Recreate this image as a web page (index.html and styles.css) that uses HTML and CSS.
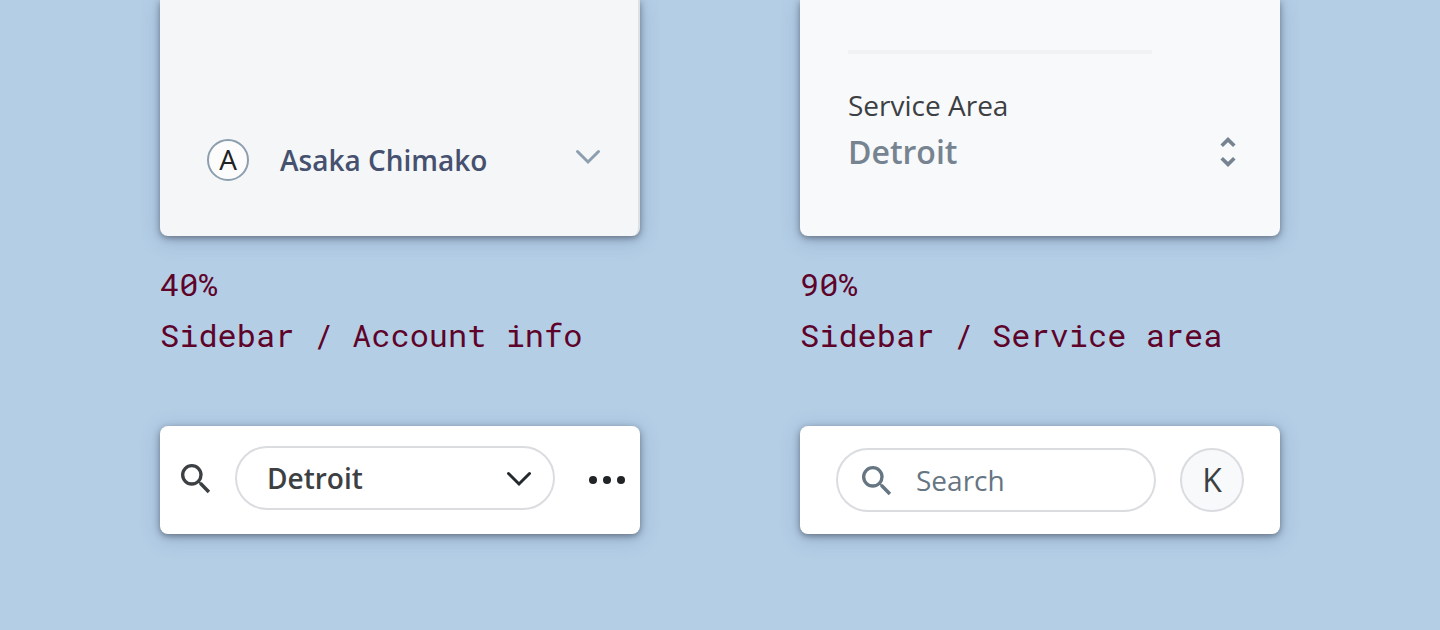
FILE: index.html
```html
<!DOCTYPE html>
<html lang="en">
<head>
<meta charset="utf-8">
<meta name="viewport" content="width=device-width, initial-scale=1">
<title>Sidebar components</title>
<link rel="stylesheet" href="styles.css">
</head>
<body>
<main class="gallery">
  <figure class="sample">
    <div class="card card-tall card-account">
      <button class="account" type="button">
        <span class="account-avatar">A</span>
        <span class="account-name">Asaka Chimako</span>
        <svg class="account-chevron" width="28" height="20" viewBox="0 0 28 20" fill="none" stroke="currentColor" stroke-width="3" stroke-linecap="round" aria-hidden="true"><path d="M3.5 4.5 14 15 24.5 4.5"/></svg>
      </button>
    </div>
    <figcaption class="caption"><span>40%</span><span>Sidebar / Account info</span></figcaption>
  </figure>

  <figure class="sample">
    <div class="card card-tall card-service">
      <hr class="divider">
      <label class="service-label" for="service-area">Service Area</label>
      <div class="picker">
        <select class="picker-field service-select" id="service-area"><option>Detroit</option></select>
        <svg class="picker-icon service-icon" width="16" height="32" viewBox="0 0 16 32" fill="none" stroke="currentColor" stroke-width="3.6" aria-hidden="true"><path d="M1.7 9.8 8 3.6l6.3 6.2M1.7 22.2 8 28.4l6.3-6.2"/></svg>
      </div>
    </div>
    <figcaption class="caption"><span>90%</span><span>Sidebar / Service area</span></figcaption>
  </figure>

  <section class="card toolbar toolbar-area">
    <button class="icon-button" type="button" aria-label="Search">
      <svg class="search-icon" width="40" height="40" viewBox="0 0 24 24" fill="currentColor" aria-hidden="true"><path d="M15.5 14h-.79l-.28-.27A6.47 6.47 0 0 0 16 9.5 6.5 6.5 0 1 0 9.5 16c1.61 0 3.09-.59 4.23-1.57l.27.28v.79l5 4.99L20.49 19zm-6 0a4.5 4.5 0 1 1 0-9 4.5 4.5 0 0 1 0 9z"/></svg>
    </button>
    <div class="picker area-picker">
      <select class="picker-field pill area-select" aria-label="Area"><option>Detroit</option></select>
      <svg class="picker-icon area-icon" width="28" height="20" viewBox="0 0 28 20" fill="none" stroke="currentColor" stroke-width="3" stroke-linecap="round" aria-hidden="true"><path d="M3.5 4.5 14 15 24.5 4.5"/></svg>
    </div>
    <button class="icon-button more" type="button" aria-label="More options">
      <svg width="36" height="8" viewBox="0 0 36 8" fill="currentColor" aria-hidden="true"><circle cx="4" cy="4" r="4"/><circle cx="18" cy="4" r="4"/><circle cx="32" cy="4" r="4"/></svg>
    </button>
  </section>

  <section class="card toolbar toolbar-search">
    <label class="pill search">
      <svg class="search-icon" width="40" height="40" viewBox="0 0 24 24" fill="currentColor" aria-hidden="true"><path d="M15.5 14h-.79l-.28-.27A6.47 6.47 0 0 0 16 9.5 6.5 6.5 0 1 0 9.5 16c1.61 0 3.09-.59 4.23-1.57l.27.28v.79l5 4.99L20.49 19zm-6 0a4.5 4.5 0 1 1 0-9 4.5 4.5 0 0 1 0 9z"/></svg>
      <input class="search-input" type="search" placeholder="Search" aria-label="Search">
    </label>
    <button class="profile" type="button">K</button>
  </section>
</main>
</body>
</html>
```
FILE: styles.css
```css
* {
  box-sizing: border-box;
}

body {
  margin: 0;
  background: #b4cee6;
  font-family: "Open Sans", "Noto Sans", sans-serif;
  font-size: 28px;
  line-height: 40px;
  color: #3c4043;
}

button,
select,
input {
  margin: 0;
  padding: 0;
  border: 0;
  background: none;
  font: inherit;
  color: inherit;
}

svg {
  display: block;
  flex: none;
}

.gallery {
  display: grid;
  grid-template-columns: repeat(2, minmax(0, 1fr));
  gap: 66px 160px;
  padding: 0 160px 96px;
}

.sample {
  display: flex;
  flex-direction: column;
  gap: 22px;
  margin: 0;
}

.card {
  border-radius: 8px;
  background: #fff;
  box-shadow: 0 2px 6px rgba(40, 45, 55, 0.5), 0 4px 20px rgba(60, 80, 120, 0.25);
}

.card-tall {
  border-radius: 0 0 8px 8px;
}

.card-account {
  flex: 1;
  display: flex;
  flex-direction: column;
  justify-content: flex-end;
  padding: 0 36px 55px 47px;
  border-right: 2px solid #dde1e4;
  background: #f4f6f8;
}

.account {
  display: flex;
  align-items: center;
  text-align: left;
}

.account-avatar {
  width: 42px;
  height: 42px;
  border: 2px solid #8d9eae;
  border-radius: 50%;
  background: #fcfcfd;
  color: #202124;
  line-height: 36px;
  text-align: center;
}

.account-name {
  flex: 1;
  margin-left: 31px;
  font-weight: 600;
  color: #46516f;
}

.account-chevron {
  margin-bottom: 6px;
  color: #8d9eae;
}

.card-service {
  padding: 50px 44px 57px 48px;
  background: #f8f9fb;
}

.divider {
  width: 304px;
  height: 4px;
  margin: 0 0 31px;
  border: 0;
  background: #f1f2f4;
}

.service-label {
  display: block;
}

.picker {
  display: grid;
  align-items: center;
}

.picker-field {
  grid-area: 1 / 1;
  width: 100%;
  appearance: none;
}

.picker-icon {
  grid-area: 1 / 1;
  justify-self: end;
  pointer-events: none;
}

.service-select {
  height: 54px;
  font-size: 32px;
  font-weight: 600;
  color: #768390;
}

.service-icon {
  color: #768390;
}

.caption {
  display: flex;
  flex-direction: column;
  font-family: "Roboto Mono", "Liberation Mono", monospace;
  font-size: 32px;
  line-height: 51px;
  color: #5e0329;
}

.toolbar {
  display: flex;
  align-items: center;
  min-height: 108px;
}

.toolbar-area {
  gap: 19px;
  padding: 20px 15px 24px 16px;
}

.search-icon {
  margin-top: 2px;
}

.area-picker {
  flex: 1;
}

.pill {
  height: 64px;
  border: 2px solid #dadce0;
  border-radius: 32px;
}

.area-select {
  padding-left: 30px;
  font-weight: 600;
}

.area-icon {
  margin: 2px 22px 0 0;
  color: #24292e;
}

.more {
  margin: 3px 0 0 15px;
  color: #202427;
}

.toolbar-search {
  gap: 24px;
  padding: 22px 36px;
}

.search {
  flex: 1;
  display: flex;
  align-items: center;
  gap: 19px;
  min-width: 0;
  padding: 0 19px;
  color: #667582;
}

.search-input {
  flex: 1;
  min-width: 0;
  appearance: none;
}

.search-input::placeholder {
  color: #667582;
  opacity: 1;
}

.profile {
  width: 64px;
  height: 64px;
  border: 2px solid #dadce0;
  border-radius: 50%;
  background: #f8f9fb;
  font-size: 32px;
}
```
